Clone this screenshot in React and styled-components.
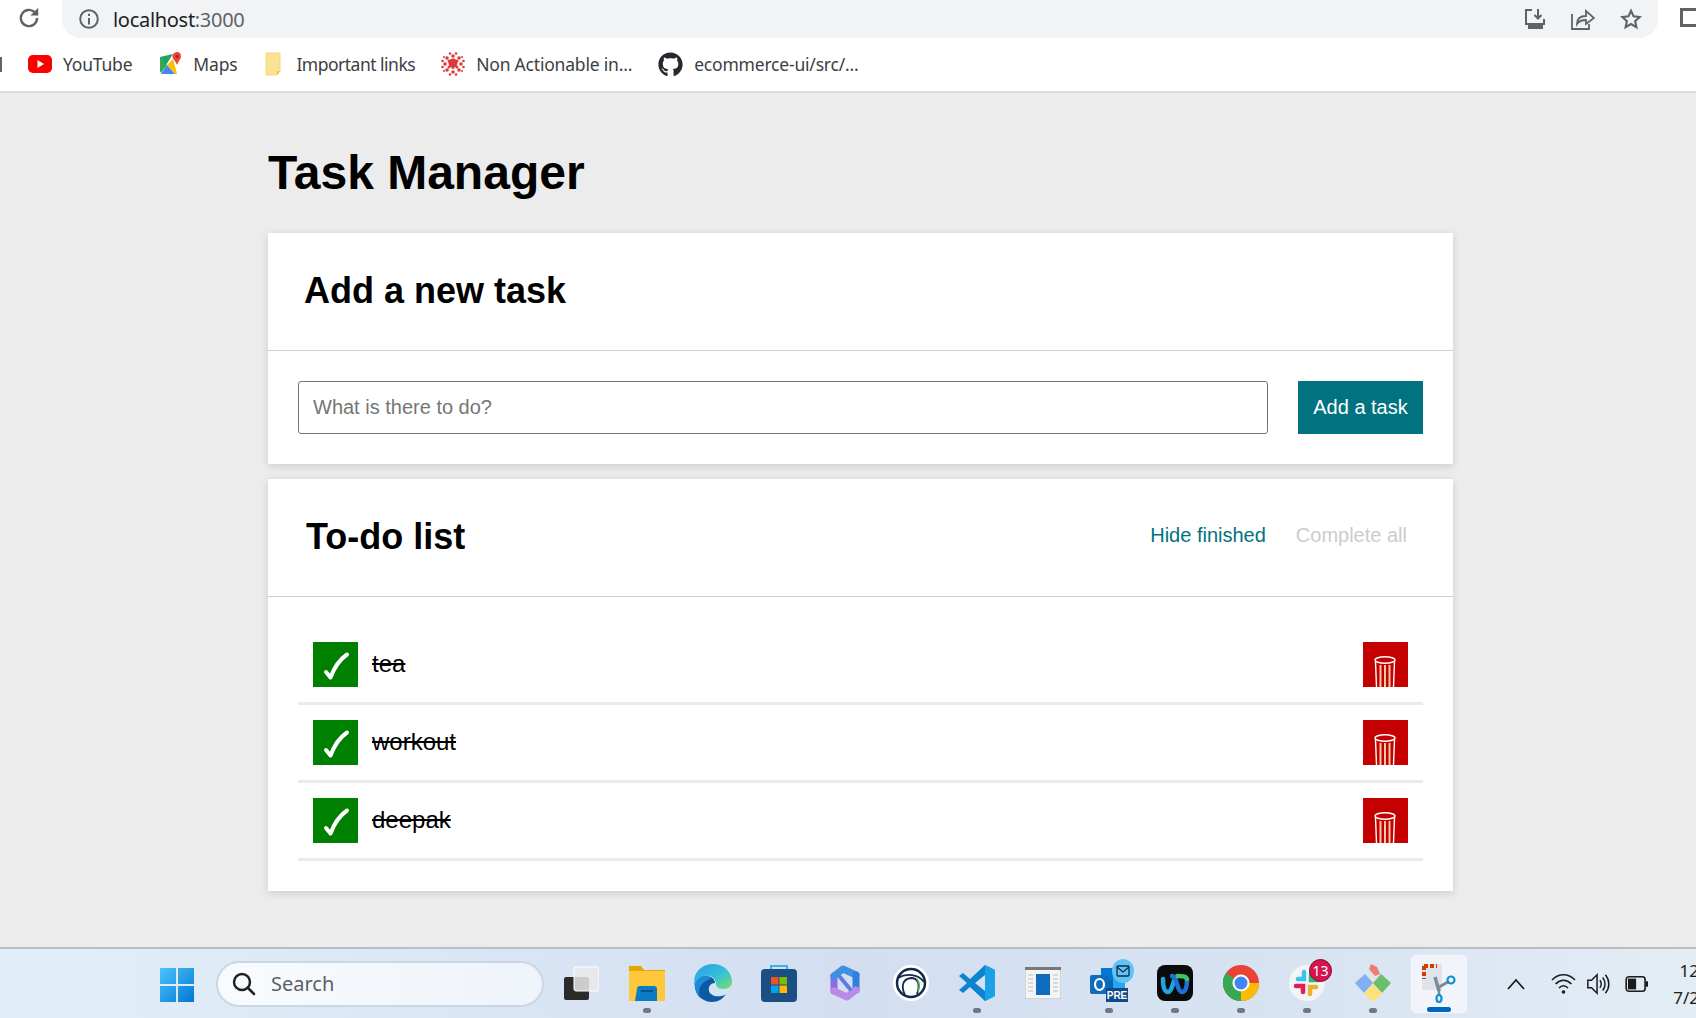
import React, { useState } from 'react';
import styled, { createGlobalStyle } from 'styled-components';
import { FaGithub } from 'react-icons/fa';

const GlobalStyle = createGlobalStyle`
  html, body {
    margin: 0;
    padding: 0;
    height: 100%;
    overflow: hidden;
    background: #ececec;
    font-family: "Liberation Sans", Arial, sans-serif;
  }
  * { box-sizing: border-box; }
`;

const Page = styled.div`
  width: 1696px;
  height: 1018px;
  display: flex;
  flex-direction: column;
  overflow: hidden;
`;

/* browser chrome */
const Toolbar = styled.div`
  height: 45px;
  flex: none;
  background: #fff;
  display: flex;
  align-items: flex-start;
  padding-left: 16px;
`;

const Reload = styled.div`
  width: 46px;
  height: 36px;
  flex: none;
  display: flex;
  align-items: center;
  color: #5f6368;
`;

const AddressBar = styled.div`
  width: 1596px;
  height: 38px;
  flex: none;
  background: #f1f3f4;
  border-radius: 0 0 19px 19px;
  display: flex;
  align-items: center;
  padding: 0 16px 0 16px;
  color: #5f6368;
`;

const Url = styled.span`
  margin-left: 13px;
  flex: 1;
  font-family: "Noto Sans", sans-serif;
  font-size: 20px;
  letter-spacing: -0.3px;
  color: #5f6368;

  b {
    font-weight: 400;
    color: #202124;
  }
`;

const BarIcons = styled.div`
  display: flex;
  align-items: center;
  gap: 25px;
`;

const SideSquare = styled.div`
  width: 20px;
  height: 19px;
  flex: none;
  margin: 8px 0 0 22px;
  border: 3px solid #5f6368;
`;

const Bookmarks = styled.div`
  height: 48px;
  flex: none;
  background: #fff;
  border-bottom: 2px solid #dcdcdc;
  display: flex;
  align-items: center;
  padding: 0 0 8px 28px;
  gap: 26px;
`;

const Stub = styled.span`
  position: absolute;
  left: 0;
  top: 57px;
  width: 2px;
  height: 15px;
  background: #5f6368;
`;

const Bookmark = styled.div`
  display: flex;
  align-items: center;
  gap: 11px;
  font-family: "Noto Sans", sans-serif;
  font-size: 17.5px;
  letter-spacing: ${(p) => p.$spacing || -0.2}px;
  color: #3c4043;
  white-space: nowrap;
`;

/* app */
const Main = styled.main`
  flex: 1;
  background: #ececec;
  padding: 50px 0 0 268px;
`;

const Container = styled.div`
  width: 1185px;
`;

const PageTitle = styled.h1`
  margin: 0 0 29px;
  height: 61px;
  font-size: 48px;
  line-height: 60px;
  font-weight: 700;
  color: #000;
`;

const Card = styled.section`
  background: #fff;
  box-shadow: 0 2px 8px rgba(0, 0, 0, 0.14);
  margin-bottom: 15px;
`;

const CardHeader = styled.header`
  height: 118px;
  border-bottom: 1px solid #d0d0d0;
  display: flex;
  align-items: center;
  justify-content: space-between;
  padding: 0 46px 2px ${(p) => p.$left}px;
`;

const CardTitle = styled.h2`
  margin: 0;
  font-size: 36px;
  font-weight: 700;
  color: #000;
`;

const Form = styled.form`
  display: flex;
  gap: 30px;
  padding: 30px;
`;

const TaskInput = styled.input`
  flex: 1;
  height: 53px;
  border: 1px solid #767676;
  border-radius: 3px;
  padding: 0 14px;
  font-family: inherit;
  font-size: 20px;
  outline: none;
  background: #fff;

  &::placeholder {
    color: #757575;
    opacity: 1;
  }
`;

const AddButton = styled.button`
  width: 125px;
  height: 53px;
  border: none;
  background: #007280;
  color: #fff;
  font-family: inherit;
  font-size: 20px;
  padding: 0;
  cursor: pointer;
`;

const Filters = styled.div`
  display: flex;
  gap: 30px;
  margin-top: -2px;
`;

const FilterLink = styled.button`
  border: none;
  background: none;
  padding: 0;
  font-family: inherit;
  font-size: 20px;
  color: ${(p) => (p.disabled ? '#cccccc' : '#007280')};
  cursor: ${(p) => (p.disabled ? 'default' : 'pointer')};
`;

const TaskList = styled.ul`
  list-style: none;
  margin: 0;
  padding: 30px;
`;

const TaskRow = styled.li`
  height: 78px;
  border-bottom: 3px solid #ebebeb;
  display: flex;
  align-items: center;
  padding: 0 15px;
`;

const Check = styled.button`
  width: 45px;
  height: 45px;
  flex: none;
  border: none;
  padding: 0;
  background: #008000;
  display: flex;
  align-items: center;
  justify-content: center;
  cursor: pointer;
`;

const TaskText = styled.span`
  flex: 1;
  margin-left: 14px;
  padding-bottom: 2px;
  font-size: 24px;
  color: #000;
  text-decoration: line-through;
`;

const Trash = styled.button`
  width: 45px;
  height: 45px;
  flex: none;
  border: none;
  padding: 0 2px 0 0;
  background: #c40000;
  overflow: hidden;
  display: flex;
  justify-content: center;
  cursor: pointer;
`;

/* windows taskbar */
const Taskbar = styled.footer`
  height: 71px;
  flex: none;
  border-top: 2px solid #b9bdc4;
  background: linear-gradient(90deg, #e2eef7 0%, #dbe7f5 25%, #d3def1 50%, #d8e3f2 75%, #e2edf5 100%);
  display: flex;
  align-items: center;
  padding-left: 159px;
`;

const StartSlot = styled.div`
  width: 36px;
  height: 36px;
  flex: none;
  margin-right: 21px;
`;

const SearchPill = styled.div`
  width: 328px;
  height: 46px;
  flex: none;
  margin-right: 4px;
  border-radius: 23px;
  background: linear-gradient(90deg, #f8fbfe, #eff3fa);
  border: 2px solid #ccd5e4;
  display: flex;
  align-items: center;
  padding-left: 13px;
  gap: 14px;
  font-family: "Noto Sans", sans-serif;
  font-size: 20px;
  color: #5c5f66;
`;

const Slot = styled.div`
  position: relative;
  width: 66px;
  height: 71px;
  flex: none;
  display: flex;
  align-items: center;
  justify-content: center;
  padding-bottom: 2px;

  ${(p) =>
    p.$dot &&
    `&::after {
      content: '';
      position: absolute;
      left: 29px;
      bottom: 6px;
      width: 8px;
      height: 5px;
      border-radius: 3px;
      background: #717680;
    }`}
`;

const ActiveSlot = styled(Slot)`
  width: 56px;
  height: 58px;
  margin: 0 5px;
  border-radius: 5px;
  background: #f1f5fb;
  box-shadow: 0 0 0 1px #e3e9f3;

  &::after {
    content: '';
    position: absolute;
    left: 16px;
    bottom: 1px;
    width: 24px;
    height: 5px;
    border-radius: 3px;
    background: #0067c0;
  }
`;

const Badge = styled.span`
  position: absolute;
  top: 11px;
  right: 8px;
  width: 23px;
  height: 23px;
  border-radius: 50%;
  background: #d5134e;
  border: 1px solid #7d1030;
  color: #fff;
  font-family: "Noto Sans", sans-serif;
  font-size: 14px;
  line-height: 21px;
  text-align: center;
`;

const MailBadge = styled.span`
  position: absolute;
  top: 11px;
  right: 8px;
  width: 22px;
  height: 24px;
  border-radius: 50%;
  background: #62c4f4;
  display: flex;
  align-items: center;
  justify-content: center;
`;

const Tray = styled.div`
  flex: 1;
  display: flex;
  align-items: center;
  margin-left: 24px;
  color: #1b1b1b;
`;

const TrayIcon = styled.div`
  width: ${(p) => p.$w}px;
  margin-left: ${(p) => p.$ml || 0}px;
  flex: none;
  display: flex;
  justify-content: center;
`;

const Clock = styled.div`
  margin-left: auto;
  margin-right: -3px;
  font-family: "Noto Sans", sans-serif;
  font-size: 17px;
  line-height: 27px;
  color: #1b1b1b;
  text-align: right;
  white-space: nowrap;
`;

const ReloadIcon = () => (
  <svg width="26" height="26" viewBox="0 0 24 24" fill="none" stroke="currentColor" strokeWidth="2.2">
    <path d="M19.500 12a7.500 7.500 0 1 1-2.300-5.400L20 9" />
    <path d="M20.500 2.500v7.200h-7.200z" fill="currentColor" stroke="none" />
  </svg>
);

const InfoIcon = () => (
  <svg width="22" height="22" viewBox="0 0 20 20" fill="none" stroke="currentColor" strokeWidth="1.800">
    <circle cx="10" cy="10" r="8" />
    <path d="M10 9v6M10 5.200v2" />
  </svg>
);

const InstallIcon = () => (
  <svg width="22" height="22" viewBox="0 0 22 22" fill="none" stroke="currentColor" strokeWidth="2">
    <path d="M8 2H2v14h18v-5" />
    <path d="M14 1v9M10.500 7l3.500 3.500L17.500 7" />
    <path d="M5 17h13v3H5z" fill="currentColor" />
  </svg>
);

const ShareIcon = () => (
  <svg width="24" height="22" viewBox="0 0 24 22" fill="none" stroke="currentColor" strokeWidth="1.800">
    <path d="M1 6v15h17v-5" />
    <path d="M6 16c0-5 3-8 9-8V3l8 7-8 6v-4c-4 0-7 1-9 4z" />
  </svg>
);

const StarIcon = () => (
  <svg width="22" height="22" viewBox="0 0 24 24" fill="none" stroke="currentColor" strokeWidth="2.300">
    <path d="M12 3l2.800 6.100 6.700.7-5 4.500 1.400 6.600L12 17.500l-5.900 3.400 1.400-6.600-5-4.500 6.700-.7z" />
  </svg>
);

const YouTubeIcon = () => (
  <svg width="24" height="18" viewBox="0 0 24 18">
    <rect width="24" height="18" rx="5" fill="#f00" />
    <path d="M9.500 5l6.500 4-6.500 4z" fill="#fff" />
  </svg>
);

const MapsIcon = () => (
  <svg width="24" height="24" viewBox="0 0 24 24">
    <path d="M2 5l13-3L3 21z" fill="#1ea362" />
    <path d="M2 5l7 8-6 8-1-2z" fill="#34a853" />
    <path d="M9 13l8 9H3z" fill="#4285f4" />
    <path d="M9 13l6-6 4 15h-2z" fill="#fbbc04" />
    <path d="M19 0c-3 0-4.500 2.300-4.500 4.300 0 2.700 3 4.700 4.500 8.700 1.500-4 4-6 4-8.700C23 2.300 22 0 19 0z" fill="#ea4335" />
    <circle cx="19" cy="4.500" r="1.500" fill="#a52714" />
  </svg>
);

const NoteIcon = () => (
  <svg width="22" height="24" viewBox="0 0 22 24">
    <path d="M3 1h14v18l-3 4H3z" fill="#fde293" stroke="#f5d77a" />
    <path d="M14 23v-4h3z" fill="#e8c25c" />
  </svg>
);

const dots = [
  [12, 11, 4.500], [12, 4, 1.800], [12, 20, 1.800], [4, 12, 1.800], [20, 12, 1.800],
  [6, 6, 1.800], [18, 6, 1.800], [6, 18, 1.800], [18, 18, 1.800], [8, 9, 1.500],
  [16, 9, 1.500], [8, 15, 1.500], [16, 15, 1.500], [9, 1.500, 1.300], [15, 1.500, 1.300],
  [9, 22.500, 1.300], [15, 22.500, 1.300], [1.500, 9, 1.300], [22.500, 9, 1.300], [1.500, 15, 1.300], [22.500, 15, 1.300],
  [12, 15.500, 1.500], [9, 12, 1], [15, 12, 1], [3, 5, 1], [21, 5, 1], [3, 19, 1], [21, 19, 1],
];

const ClusterIcon = () => (
  <svg width="24" height="24" viewBox="0 0 24 24">
    {dots.map(([cx, cy, r]) => (
      <circle key={`${cx}-${cy}`} cx={cx} cy={cy} r={r} fill="#dc3a3a" />
    ))}
  </svg>
);

const CheckMark = () => (
  <svg width="28" height="32" viewBox="0 0 28 32" fill="none" stroke="#fff" strokeLinecap="round" strokeLinejoin="round">
    <path d="M4 23l4.500 5.500C12 19 17 11 25 5.500" strokeWidth="4" />
  </svg>
);

const TrashIcon = () => (
  <svg width="24" height="45" viewBox="0 0 24 45" fill="none" stroke="#fff" strokeWidth="1.400">
    <ellipse cx="12" cy="18" rx="10" ry="3.200" />
    <path d="M2.500 19l1 26M21.500 19l-1 26" />
    <path d="M7.500 23v22M12 23v22M16.500 23v22" stroke="#f6c9a8" strokeWidth="2" />
  </svg>
);

const WindowsIcon = () => (
  <svg width="36" height="36" viewBox="0 0 36 36">
    <defs>
      <linearGradient id="win" x1="0" y1="0" x2="1" y2="1">
        <stop offset="0" stopColor="#4fc3fb" />
        <stop offset="1" stopColor="#0078d4" />
      </linearGradient>
    </defs>
    <path d="M1 2h16v16H1zM19 2h16v16H19zM1 20h16v16H1zM19 20h16v16H19z" fill="url(#win)" />
  </svg>
);

const SearchIcon = () => (
  <svg width="26" height="26" viewBox="0 0 26 26" fill="none" stroke="#202020" strokeWidth="2.500" strokeLinecap="round">
    <circle cx="11" cy="11" r="8" />
    <path d="M17 17l6 6" />
  </svg>
);

const TaskViewIcon = () => (
  <svg width="36" height="34" viewBox="0 0 36 34">
    <rect x="1" y="11" width="25" height="23" rx="2" fill="#2b2b2b" />
    <rect x="11" y="1" width="25" height="24" rx="2" fill="#e9e9e9" fillOpacity="0.85" stroke="#fff" />
  </svg>
);

const FolderIcon = () => (
  <svg width="38" height="36" viewBox="0 0 38 36">
    <path d="M1 1h12l3 4h21v31H1z" fill="#e6a700" />
    <path d="M1 6h36v30H1z" fill="#fdc83b" />
    <path d="M9 24a3 3 0 0 1 3-3h14a3 3 0 0 1 3 3v12H7z" fill="#0b7bc7" />
    <path d="M13 26h12" stroke="#05538d" strokeWidth="2" />
  </svg>
);

const EdgeIcon = () => (
  <svg width="38" height="38" viewBox="0 0 38 38">
    <defs>
      <linearGradient id="edge" x1="0" y1="0" x2="1" y2="1">
        <stop offset="0" stopColor="#2b9be8" />
        <stop offset="0.55" stopColor="#35c1d8" />
        <stop offset="1" stopColor="#7ce06a" />
      </linearGradient>
    </defs>
    <path d="M19 0c11 0 19 8 19 18 0 4-3 7-8 7-5 0-8-2-8-5 0-6-5-9-11-8C7 13 2 18 1 24-3 10 7 0 19 0z" fill="url(#edge)" />
    <path d="M1 22c1-6 6-10 11-10 5 0 9 3 9 7-4 0-7 3-6 8 1 4 6 6 12 5 2 0 4-1 5-2-3 5-8 8-14 8C9 38 1 31 1 22z" fill="#0c59a4" />
    <path d="M12 12c-5 0-10 4-11 10 0 5 2 9 5 12-3-8 1-17 11-19-1-2-3-3-5-3z" fill="#1f8ad8" />
  </svg>
);

const StoreIcon = () => (
  <svg width="36" height="38" viewBox="0 0 36 38">
    <path d="M10 6V2h16v4" fill="none" stroke="#33b5e5" strokeWidth="2" />
    <rect y="5" width="36" height="33" rx="4" fill="#1c4e86" />
    <path d="M10 13h7.500v7.500H10z" fill="#f25022" />
    <path d="M18.500 13H26v7.500h-7.500z" fill="#7fba00" />
    <path d="M10 21.500h7.500V29H10z" fill="#00a4ef" />
    <path d="M18.500 21.500H26V29h-7.500z" fill="#ffb900" />
  </svg>
);

const CopilotIcon = () => (
  <svg width="32" height="36" viewBox="0 0 32 36" fill="none" strokeWidth="7" strokeLinecap="round" strokeLinejoin="round">
    <path d="M5 26V11" stroke="#8a6de0" />
    <path d="M5 11l9-7 13 6" stroke="#3f8fe3" />
    <path d="M27 10v15" stroke="#2f7fdc" />
    <path d="M27 25l-9 7-13-6" stroke="#b98ae6" />
    <path d="M11 12l10 12" stroke="#5b7de0" strokeWidth="4" />
  </svg>
);

const GlobeIcon = () => (
  <svg width="36" height="36" viewBox="0 0 36 36" fill="none">
    <circle cx="18" cy="18" r="18" fill="#fff" />
    <circle cx="18" cy="18" r="14" stroke="#10294d" strokeWidth="2.500" />
    <path d="M5 13c8-5 20-4 26 4M12 30c-4-8-3-16 6-17 6 0 10 5 6 16" stroke="#10294d" strokeWidth="1.800" />
    <path d="M24 14c3 4 3 8 1 13" stroke="#5cb85c" strokeWidth="1.500" />
  </svg>
);

const VsCodeIcon = () => (
  <svg width="36" height="38" viewBox="0 0 36 38">
    <path d="M26 1l10 5v26l-10 5-15-14-7 6-4-3 8-7-8-7 4-3 7 6z" fill="#0a84d0" />
    <path d="M26 1l10 5v26l-10 5z" fill="#1ba1e8" />
    <path d="M26 11v16l-10-8z" fill="#d6e0f1" />
  </svg>
);

const PanelIcon = () => (
  <svg width="36" height="32" viewBox="0 0 36 32">
    <rect width="36" height="32" fill="#f4f4f4" stroke="#b5b5b5" />
    <rect width="36" height="3" fill="#777" />
    <rect x="11" y="7" width="14" height="21" fill="#0f6cbd" />
    <path d="M3 8h5M3 12h5M3 16h5M3 20h5M3 24h5M28 8h5M28 12h5M28 16h5M28 20h5M28 24h5" stroke="#cfcfcf" strokeWidth="1.500" />
  </svg>
);

const OutlookIcon = () => (
  <svg width="38" height="38" viewBox="0 0 38 38">
    <path d="M11 4h24v24H11z" fill="#28a8ea" />
    <path d="M11 4h12v12H11z" fill="#0078d4" />
    <path d="M11 16h12v12H11z" fill="#0364b8" />
    <rect x="0" y="11" width="19" height="19" rx="2" fill="#0f6cbd" />
    <ellipse cx="9.500" cy="20.500" rx="4.500" ry="5.500" fill="none" stroke="#fff" strokeWidth="2.200" />
    <rect x="16" y="24" width="22" height="14" fill="#12498a" />
    <text x="27" y="35" fill="#fff" fontSize="10" fontWeight="700" textAnchor="middle" fontFamily="Liberation Sans, sans-serif">PRE</text>
  </svg>
);

const WebexIcon = () => (
  <svg width="36" height="36" viewBox="0 0 36 36" fill="none" strokeLinecap="round">
    <rect width="36" height="36" rx="8" fill="#0b0b0b" />
    <path d="M6 14c0 8 1 13 5 13 5 0 5-16 10-16" stroke="#1fa6e0" strokeWidth="4.500" />
    <path d="M15 11c5 0 5 16 10 16 4 0 5-5 5-13" stroke="#1f6fd8" strokeWidth="4.500" />
    <path d="M21 11c4 0 8 0 9 3" stroke="#3cc46a" strokeWidth="4.500" />
  </svg>
);

const ChromeIcon = () => (
  <svg width="36" height="36" viewBox="0 0 36 36">
    <circle cx="18" cy="18" r="18" fill="#ea4335" />
    <path d="M18 18L2.400 27A18 18 0 0 1 3 8z" fill="#34a853" />
    <path d="M18 18L18 36A18 18 0 0 1 2.400 27z" fill="#34a853" />
    <path d="M18 18h18A18 18 0 0 1 18 36z" fill="#fbbc04" />
    <circle cx="18" cy="18" r="8.500" fill="#fff" />
    <circle cx="18" cy="18" r="6.500" fill="#4285f4" />
  </svg>
);

const SlackIcon = () => (
  <svg width="36" height="36" viewBox="0 0 36 36" fill="none" strokeWidth="4.500" strokeLinecap="round">
    <circle cx="18" cy="18" r="18" fill="#f4f4f4" />
    <path d="M15 7v7H9" stroke="#36c5f0" />
    <path d="M29 15h-7V9" stroke="#2eb67d" />
    <path d="M21 29v-7h6" stroke="#ecb22e" />
    <path d="M7 21h7v6" stroke="#e01e5a" />
  </svg>
);

const DiamondsIcon = () => (
  <svg width="36" height="38" viewBox="0 0 36 38">
    <path d="M18 9l9 10-9 10-9-10z" fill="#e4e4e4" />
    <path d="M10 10l8 9-9 10-9-10z" fill="#7fb0f4" />
    <path d="M26 10l10 9-9 10-9-10z" fill="#6cbd6c" />
    <path d="M18 20l9 9-9 9-9-9z" fill="#fbe27a" />
    <path d="M16 0l6 3 3 7-5 2-6-7z" fill="#ef7b73" />
  </svg>
);

const SnipIcon = () => (
  <svg width="36" height="40" viewBox="0 0 36 40" fill="none">
    <rect x="1" y="1" width="20" height="26" fill="#dfe3ea" />
    <path d="M3 3h13M3 3v13" stroke="#d83b01" strokeWidth="4" strokeDasharray="4 2" />
    <path d="M14 14l4 14" stroke="#7d8a99" strokeWidth="3.500" />
    <path d="M18 24l9-5" stroke="#7d8a99" strokeWidth="3" />
    <circle cx="30" cy="17" r="3.500" stroke="#0f8fd4" strokeWidth="2.200" />
    <path d="M18 26v6" stroke="#7d8a99" strokeWidth="2.500" />
    <ellipse cx="18" cy="35.500" rx="2.500" ry="3.500" stroke="#0f8fd4" strokeWidth="2.200" />
  </svg>
);

const ChevronIcon = () => (
  <svg width="18" height="12" viewBox="0 0 18 12" fill="none" stroke="currentColor" strokeWidth="1.800">
    <path d="M1 11l8-9 8 9" />
  </svg>
);

const WifiIcon = () => (
  <svg width="25" height="24" viewBox="0 0 25 24" fill="none" stroke="currentColor" strokeWidth="1.600">
    <path d="M1 8c7-7 16-7 23 0M4.500 12c5-5 11-5 16 0M8 16c3-3 6-3 9 0" />
    <circle cx="12.500" cy="20" r="1.800" fill="currentColor" stroke="none" />
  </svg>
);

const SoundIcon = () => (
  <svg width="24" height="24" viewBox="0 0 26 26" fill="none" stroke="currentColor" strokeWidth="1.600">
    <path d="M2 9h4l6-6v20l-6-6H2z" />
    <path d="M15 9c2 2 2 6 0 8M18 6c3.500 4 3.500 10 0 14M21 3c5 6 5 14 0 20" />
  </svg>
);

const BatteryIcon = () => (
  <svg width="24" height="18" viewBox="0 0 26 20" fill="none" stroke="currentColor" strokeWidth="1.800">
    <rect x="1" y="2" width="21" height="16" rx="3" />
    <path d="M3 4h9v12H3z" fill="currentColor" stroke="none" />
    <path d="M24 7v6" strokeWidth="2.500" />
  </svg>
);

function App() {
  const [tasks] = useState(['tea', 'workout', 'deepak']);

  return (
    <Page>
      <GlobalStyle />
      <Toolbar>
        <Reload><ReloadIcon /></Reload>
        <AddressBar>
          <InfoIcon />
          <Url><b>localhost</b>:3000</Url>
          <BarIcons>
            <InstallIcon />
            <ShareIcon />
            <StarIcon />
          </BarIcons>
        </AddressBar>
        <SideSquare />
      </Toolbar>
      <Bookmarks>
        <Stub />
        <Bookmark><YouTubeIcon />YouTube</Bookmark>
        <Bookmark><MapsIcon />Maps</Bookmark>
        <Bookmark $spacing={-0.5}><NoteIcon />Important links</Bookmark>
        <Bookmark><ClusterIcon />Non Actionable in...</Bookmark>
        <Bookmark><FaGithub size={25} color="#24292e" />ecommerce-ui/src/...</Bookmark>
      </Bookmarks>

      <Main>
        <Container>
          <PageTitle>Task Manager</PageTitle>
          <Card>
            <CardHeader $left={36}>
              <CardTitle>Add a new task</CardTitle>
            </CardHeader>
            <Form onSubmit={(e) => e.preventDefault()}>
              <TaskInput type="text" placeholder="What is there to do?" />
              <AddButton type="submit">Add a task</AddButton>
            </Form>
          </Card>
          <Card>
            <CardHeader $left={38}>
              <CardTitle>To-do list</CardTitle>
              <Filters>
                <FilterLink>Hide finished</FilterLink>
                <FilterLink disabled>Complete all</FilterLink>
              </Filters>
            </CardHeader>
            <TaskList>
              {tasks.map((task) => (
                <TaskRow key={task}>
                  <Check><CheckMark /></Check>
                  <TaskText>{task}</TaskText>
                  <Trash><TrashIcon /></Trash>
                </TaskRow>
              ))}
            </TaskList>
          </Card>
        </Container>
      </Main>

      <Taskbar>
        <StartSlot><WindowsIcon /></StartSlot>
        <SearchPill><SearchIcon />Search</SearchPill>
        <Slot><TaskViewIcon /></Slot>
        <Slot $dot><FolderIcon /></Slot>
        <Slot><EdgeIcon /></Slot>
        <Slot><StoreIcon /></Slot>
        <Slot><CopilotIcon /></Slot>
        <Slot><GlobeIcon /></Slot>
        <Slot $dot><VsCodeIcon /></Slot>
        <Slot><PanelIcon /></Slot>
        <Slot $dot>
          <OutlookIcon />
          <MailBadge>
            <svg width="14" height="12" viewBox="0 0 14 12" fill="none" stroke="#10294d" strokeWidth="1.300">
              <rect x="1" y="1" width="12" height="10" rx="1" />
              <path d="M1 2l6 5 6-5" />
            </svg>
          </MailBadge>
        </Slot>
        <Slot $dot><WebexIcon /></Slot>
        <Slot $dot><ChromeIcon /></Slot>
        <Slot $dot><SlackIcon /><Badge>13</Badge></Slot>
        <Slot $dot><DiamondsIcon /></Slot>
        <ActiveSlot><SnipIcon /></ActiveSlot>
        <Tray>
          <TrayIcon $w={40}><ChevronIcon /></TrayIcon>
          <TrayIcon $w={26} $ml={14}><WifiIcon /></TrayIcon>
          <TrayIcon $w={26} $ml={9}><SoundIcon /></TrayIcon>
          <TrayIcon $w={26} $ml={13}><BatteryIcon /></TrayIcon>
          <Clock>12<br />7/2</Clock>
        </Tray>
      </Taskbar>
    </Page>
  );
}

export default App;
